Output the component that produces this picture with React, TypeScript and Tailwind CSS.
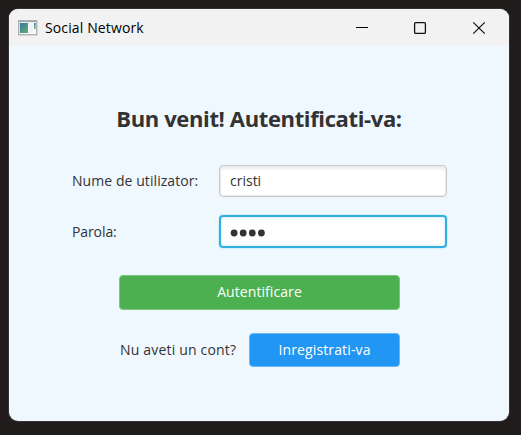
import React from "react";

function AppIcon() {
  return (
    <svg width="20" height="16" viewBox="0 0 20 16" className="shrink-0">
      <defs>
        <linearGradient id="pane" x1="0" y1="0" x2="1" y2="1">
          <stop offset="0" stopColor="#3c78a4" />
          <stop offset="1" stopColor="#5cb06c" />
        </linearGradient>
        <linearGradient id="bar" x1="0" y1="0" x2="0" y2="1">
          <stop offset="0" stopColor="#3b7fc0" />
          <stop offset="1" stopColor="#62b884" />
        </linearGradient>
      </defs>
      <rect x="0.75" y="0.75" width="18" height="14" fill="#fbfbfb" stroke="#a9abb2" strokeWidth="1.3" />
      <rect x="1" y="0.6" width="17.5" height="1.6" fill="#a3a7b0" />
      <rect x="2" y="3" width="8" height="10" fill="url(#pane)" />
      <rect x="11.3" y="3" width="3.6" height="10" fill="#f0f0f0" />
      <rect x="16" y="3" width="1.6" height="6" fill="url(#bar)" />
    </svg>
  );
}

function TitleBar() {
  return (
    <div className="flex h-[37px] items-center bg-[#f2f2f2] pl-[9px] text-black">
      <AppIcon />
      <span className="ml-[7px] text-[14px] leading-[20px] whitespace-nowrap tracking-[0.13px]">Social Network</span>
      <div className="ml-auto flex pr-[4px]">
        <svg width="58" height="36" viewBox="0 0 58 36" shapeRendering="crispEdges">
          <rect x="25" y="17" width="12" height="1" fill="#000" />
        </svg>
        <svg width="58" height="36" viewBox="0 0 58 36">
          <rect x="25.6" y="12.6" width="10.8" height="10.8" rx="1" fill="none" stroke="#111" strokeWidth="1.3" />
        </svg>
        <svg width="58" height="36" viewBox="0 0 58 36">
          <path d="M26.3 12.3 37.7 23.7M37.7 12.3 26.3 23.7" stroke="#111" strokeWidth="1.2" />
        </svg>
      </div>
    </div>
  );
}

function Dots() {
  return (
    <svg width="38" height="10" viewBox="0 0 38 10" fill="#333" className="mt-[2px]">
      <circle cx="4.1" cy="5" r="3.4" />
      <circle cx="13.2" cy="5" r="3.4" />
      <circle cx="22.3" cy="5" r="3.4" />
      <circle cx="31.4" cy="5" r="3.4" />
    </svg>
  );
}

export default function App() {
  return (
    <div className="h-[435px] w-[521px] bg-[#201c1b] pt-[9px] pl-[9px] font-['Open_Sans','Noto_Sans',sans-serif] text-[14px] text-[#333]">
      <div className="h-[412px] w-[500px] overflow-hidden rounded-[9px] bg-[#f0f8ff] shadow-[0_0_0_1px_#353231]">
        <TitleBar />
        <h1 className="mt-[56px] h-[32px] text-center text-[22px] leading-[32px] font-bold whitespace-nowrap tracking-[-0.37px]">
          Bun venit! Autentificati-va:
        </h1>
        <div className="mt-[30px] ml-[63px] flex h-[33px] items-center">
          <label className="w-[147px] whitespace-nowrap tracking-[0.07px]">Nume de utilizator:</label>
          <div className="flex h-[32px] w-[228px] items-center rounded-[4px] border border-[#c6c7c8] bg-white pl-[10px] shadow-[inset_0_0_0_1px_#ececec,inset_0_3px_3px_#ececec]">
            cristi
          </div>
        </div>
        <div className="mt-[18px] ml-[63px] flex h-[33px] items-center">
          <label className="w-[147px] whitespace-nowrap tracking-[-0.1px]">Parola:</label>
          <div className="flex h-[33px] w-[228px] items-center rounded-[4px] border-2 border-[#30afdc] bg-white pl-[9px] shadow-[0_0_1px_1px_#d3eefa,inset_0_0_3px_1px_#e0f1f8]">
            <Dots />
          </div>
        </div>
        <button className="mt-[27px] ml-[110px] flex h-[35px] w-[281px] items-center justify-center rounded-[4px] border border-[#7cc57f] bg-[#4caf50] pb-[2px] text-white tracking-[0.07px]">
          Autentificare
        </button>
        <div className="mt-[23px] ml-[111px] flex h-[34px] items-center">
          <span className="w-[129px] pb-[2px] whitespace-nowrap tracking-[0.18px]">Nu aveti un cont?</span>
          <button className="flex h-[34px] w-[151px] items-center justify-center rounded-[4px] border border-[#6bb8f7] bg-[#2196f3] pb-[2px] text-white tracking-[0.13px]">
            Inregistrati-va
          </button>
        </div>
      </div>
    </div>
  );
}
